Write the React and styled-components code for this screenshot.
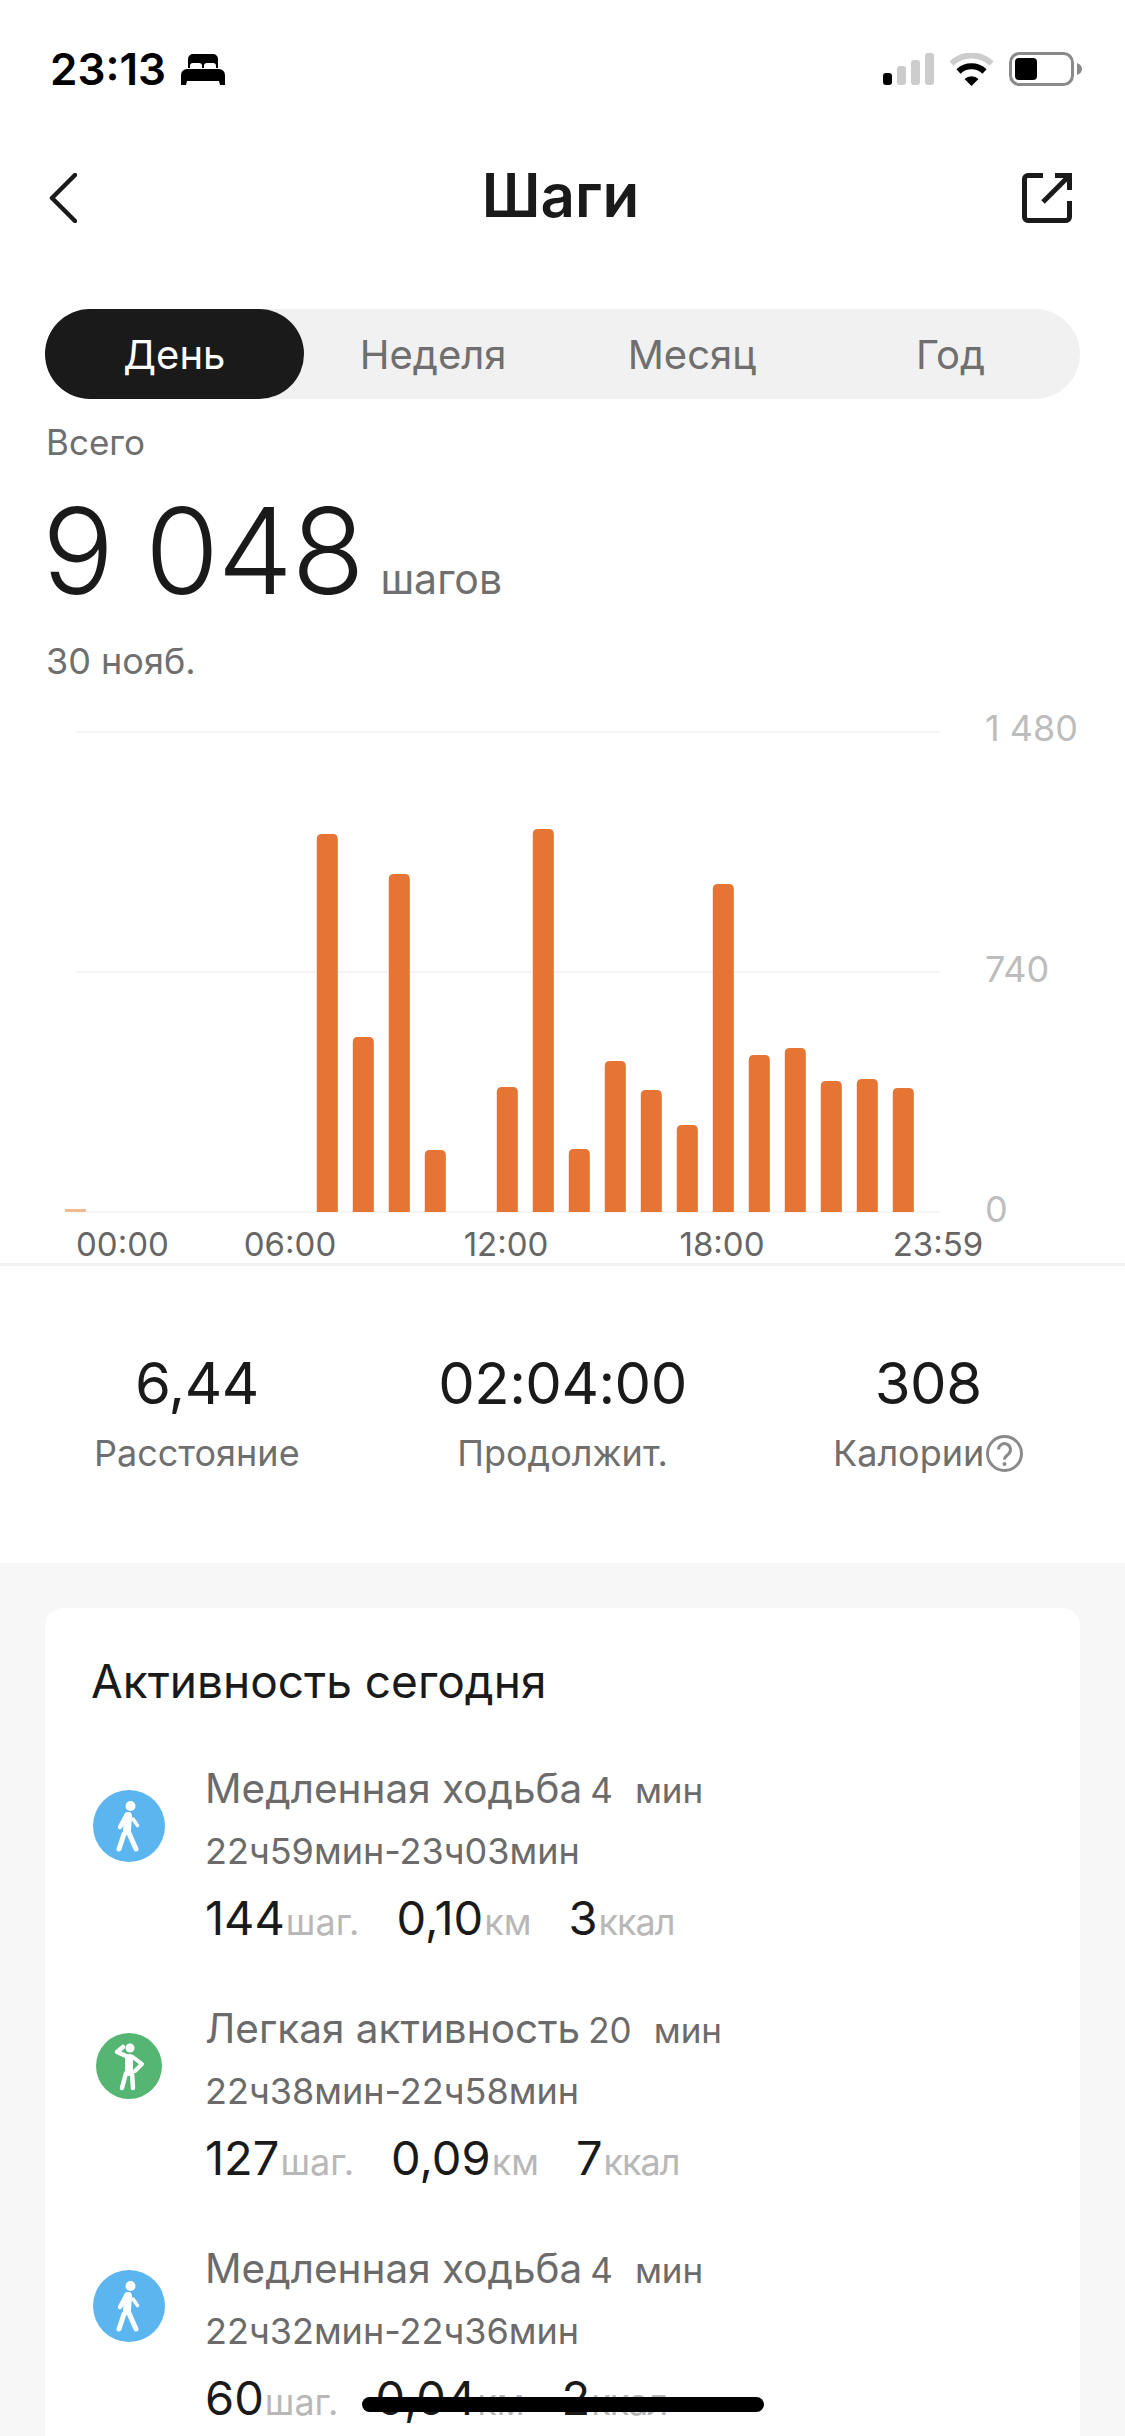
import React from 'react';
import styled, { createGlobalStyle } from 'styled-components';

const GlobalStyle = createGlobalStyle`
  html, body {
    margin: 0;
    padding: 0;
    background: #fff;
    font-family: 'Inter', 'Noto Sans', sans-serif;
    color: #1a1a1a;
  }
`;

const Screen = styled.div`
  position: relative;
  width: 1125px;
  height: 2436px;
  overflow: hidden;
  background: #fff;
`;

const StatusBar = styled.div`
  height: 138px;
  padding: 0 43px 0 50px;
  box-sizing: border-box;
  display: flex;
  align-items: center;
  justify-content: space-between;
`;

const StatusLeft = styled.div`
  display: flex;
  align-items: center;
  gap: 15px;
`;

const Clock = styled.span`
  font-size: 44px;
  font-weight: 600;
  line-height: 48px;
  color: #000;
`;

const StatusRight = styled.div`
  display: flex;
  align-items: center;
  gap: 15px;
`;

const NavBar = styled.div`
  height: 120px;
  padding: 0 53px 0 49px;
  display: grid;
  grid-template-columns: 1fr auto 1fr;
  align-items: center;
`;

const NavTitle = styled.h1`
  margin: -7px 0 0;
  font-size: 60px;
  font-weight: 600;
  line-height: 70px;
`;

const NavRight = styled.div`
  display: flex;
  justify-content: flex-end;
`;

const Tabs = styled.div`
  margin: 51px 45px 0;
  height: 90px;
  display: grid;
  grid-template-columns: repeat(4, 1fr);
  background: #f1f1f1;
  border-radius: 45px;
`;

const Tab = styled.div`
  display: flex;
  align-items: center;
  justify-content: center;
  border-radius: 45px;
  font-size: 40px;
  background: ${(p) => (p.$active ? '#1a1a1a' : 'transparent')};
  color: ${(p) => (p.$active ? '#fff' : '#6f6f6f')};
`;

const Summary = styled.div`
  padding: 23px 46px 0;
`;

const SummaryLabel = styled.div`
  font-size: 35px;
  line-height: 40px;
  color: #6f6f6f;
`;

const TotalRow = styled.div`
  margin-top: 29px;
  display: flex;
  align-items: baseline;
  gap: 17px;
`;

const TotalValue = styled.span`
  margin-left: -4px;
  font-size: 120px;
  font-weight: 360;
  line-height: 120px;
  letter-spacing: -1.500px;
  color: #1a1a1a;
`;

const TotalUnit = styled.span`
  font-size: 41px;
  color: #6f6f6f;
`;

const DateLabel = styled(SummaryLabel)`
  margin-top: 30px;
  font-size: 36px;
`;

const ChartRow = styled.div`
  margin-top: 35px;
  height: 512px;
  display: flex;
  align-items: flex-start;
`;

const Plot = styled.svg`
  display: block;
  flex: none;
`;

const YAxis = styled.div`
  margin: -6px 0 0 45px;
  height: 517px;
  display: flex;
  flex-direction: column;
  justify-content: space-between;
`;

const YLabel = styled.span`
  font-size: 36px;
  line-height: 36px;
  color: #bdbdbd;
`;

const XAxis = styled.div`
  padding: 0 0 2px 76px;
  display: grid;
  grid-template-columns: 106px repeat(4, 216px);
  justify-items: center;
`;

const XLabel = styled.span`
  font-size: 33px;
  line-height: 33px;
  color: #666;
  &:first-child {
    justify-self: start;
  }
`;

const Divider = styled.div`
  height: 3px;
  background: #f0f0f0;
`;

const Stats = styled.div`
  height: 297px;
  padding: 87px 14px 0;
  box-sizing: border-box;
  display: grid;
  grid-template-columns: repeat(3, 1fr);
  justify-items: center;
  align-content: start;
`;

const Stat = styled.div`
  display: flex;
  flex-direction: column;
  align-items: center;
  gap: 20px;
`;

const StatValue = styled.div`
  font-size: 58px;
  line-height: 60px;
  letter-spacing: -0.500px;
`;

const StatLabel = styled.div`
  display: flex;
  align-items: center;
  gap: 2px;
  font-size: 36px;
  line-height: 40px;
  color: #6f6f6f;
`;

const Section = styled.div`
  background: #f7f7f7;
  padding: 45px 45px 0;
  height: 900px;
`;

const Card = styled.div`
  background: #fff;
  border-radius: 18px;
  padding: 48px 46px 0;
  height: 900px;
`;

const CardTitle = styled.h2`
  margin: 0 0 61px;
  font-size: 46px;
  font-weight: 400;
  line-height: 50px;
`;

const Activity = styled.div`
  height: 240px;
  display: flex;
  gap: 38px;
`;

const IconSlot = styled.div`
  flex: none;
  width: 76px;
  height: 118px;
  display: flex;
  align-items: center;
  justify-content: center;
`;

const ActivityBody = styled.div`
  display: flex;
  flex-direction: column;
`;

const ActivityTitle = styled.div`
  display: flex;
  align-items: baseline;
  font-size: 40.500px;
  line-height: 44px;
  color: #6b6b6b;
`;

const Duration = styled.span`
  margin-left: 8px;
  font-size: 35px;
`;

const DurationUnit = styled.span`
  margin-left: 22px;
  font-size: 35px;
`;

const TimeRange = styled.div`
  margin-top: 19px;
  font-size: 36px;
  line-height: 40px;
  color: #6b6b6b;
`;

const Metrics = styled.div`
  margin-top: 19px;
  display: flex;
  gap: 37px;
`;

const Metric = styled.div`
  display: flex;
  align-items: baseline;
  gap: 1px;
`;

const MetricValue = styled.span`
  font-size: 47px;
  line-height: 56px;
  color: #1a1a1a;
`;

const MetricUnit = styled.span`
  font-size: 36px;
  letter-spacing: ${(p) => (p.$tight ? '-1px' : '0')};
  color: #b8b8b8;
`;

const HomeBar = styled.div`
  position: absolute;
  left: 362px;
  bottom: 24px;
  width: 402px;
  height: 15px;
  border-radius: 8px;
  background: #000;
`;

const BedIcon = () => (
  <svg width="44" height="31" viewBox="0 0 44 31" fill="#000">
    <path d="M7 14V5a5 5 0 0 1 5-5h20a5 5 0 0 1 5 5v9h-2v-2a3 3 0 0 0-3-3h-6a3 3 0 0 0-3 3v2h-2v-2a3 3 0 0 0-3-3h-6a3 3 0 0 0-3 3v2z" />
    <path d="M0 21a6 6 0 0 1 6-6h32a6 6 0 0 1 6 6v10h-5l-1-4H6l-1 4H0z" />
  </svg>
);

const SignalIcon = () => (
  <svg width="51" height="32" viewBox="0 0 51 32">
    <rect x="0" y="20" width="9" height="12" rx="3" fill="#000" />
    <rect x="14" y="13" width="9" height="19" rx="3" fill="#ccc" />
    <rect x="28" y="7" width="9" height="25" rx="3" fill="#ccc" />
    <rect x="42" y="0" width="9" height="32" rx="3" fill="#ccc" />
  </svg>
);

const WifiIcon = () => (
  <svg width="45" height="33" viewBox="0 0 45 33" fill="none">
    <path d="M2.500 10.500a29 29 0 0 1 40 0" stroke="#ccc" strokeWidth="6" />
    <path d="M9.500 18.500a19 19 0 0 1 26 0" stroke="#000" strokeWidth="6" />
    <path d="M22.500 33L15.500 26a10 10 0 0 1 14 0z" fill="#000" />
  </svg>
);

const BatteryIcon = () => (
  <svg width="73" height="34" viewBox="0 0 73 34">
    <rect x="1.500" y="1.500" width="62" height="31" rx="9" fill="none" stroke="#8a8a8a" strokeWidth="3" />
    <rect x="6" y="6" width="22" height="22" rx="4" fill="#000" />
    <path d="M68 11c3 1 5 3 5 6s-2 5-5 6z" fill="#8a8a8a" />
  </svg>
);

const BackIcon = () => (
  <svg width="28" height="50" viewBox="0 0 28 50" fill="none">
    <path d="M26 2L3 25l23 23" stroke="#1a1a1a" strokeWidth="4.500" strokeLinecap="round" strokeLinejoin="round" />
  </svg>
);

const ShareIcon = () => (
  <svg width="50" height="50" viewBox="0 0 50 50" fill="none" stroke="#1a1a1a" strokeWidth="5">
    <path d="M21 2.500H6a3.500 3.500 0 0 0-3.500 3.500v38a3.500 3.500 0 0 0 3.500 3.500h38a3.500 3.500 0 0 0 3.500-3.500V28" />
    <path d="M33 2.500h14.500V17" />
    <path d="M46 4L21 29" />
  </svg>
);

const HelpIcon = () => (
  <svg width="37" height="37" viewBox="0 0 37 37" fill="none">
    <circle cx="18.500" cy="18.500" r="17" stroke="#8a8a8a" strokeWidth="3" />
    <path d="M12.500 14.500a6 6 0 1 1 9.500 5c-2 1.500-3.500 2.500-3.500 5" stroke="#8a8a8a" strokeWidth="3" />
    <circle cx="18.500" cy="29" r="2" fill="#8a8a8a" />
  </svg>
);

const WalkIcon = () => (
  <svg width="72" height="72" viewBox="0 0 72 72">
    <circle cx="36" cy="36" r="36" fill="#5bb5ef" />
    <g fill="none" stroke="#fff" strokeLinecap="round" strokeLinejoin="round">
      <circle cx="37.500" cy="16" r="5" fill="#fff" stroke="none" />
      <path d="M35 26l-1 15" strokeWidth="8" />
      <path d="M33 26l-6 11" strokeWidth="4.500" />
      <path d="M40 29l4.500 6.500" strokeWidth="3.500" />
      <path d="M31 44l-5 15" strokeWidth="5" />
      <path d="M35 41l8 18" strokeWidth="5" />
    </g>
  </svg>
);

const StretchIcon = () => (
  <svg width="66" height="66" viewBox="0 0 66 66">
    <circle cx="33" cy="33" r="33" fill="#55b573" />
    <g fill="none" stroke="#fff" strokeLinecap="round" strokeLinejoin="round">
      <circle cx="34" cy="15" r="4.500" fill="#fff" stroke="none" />
      <path d="M33 25v14" strokeWidth="8" />
      <path d="M30 23l-9-4 6-5" strokeWidth="4.500" />
      <path d="M36 23.500l10 7.500-7 7" strokeWidth="4" />
      <path d="M30 40l-4 15" strokeWidth="4.500" />
      <path d="M36 40l1 15" strokeWidth="4.500" />
    </g>
  </svg>
);

const BASE_Y = 496;
const SLOT = 36;
const FIRST_SLOT = 75.3;
const BAR_W = 21;

// slot -> bar height in px
const bars = [
  [7, 378],
  [8, 175],
  [9, 338],
  [10, 62],
  [12, 125],
  [13, 383],
  [14, 63],
  [15, 151],
  [16, 122],
  [17, 87],
  [18, 328],
  [19, 157],
  [20, 164],
  [21, 131],
  [22, 133],
  [23, 124],
];

const barPath = (slot, h) => {
  const x = FIRST_SLOT + SLOT * slot - BAR_W / 2;
  const y = BASE_Y - h;
  return `M${x} ${BASE_Y}V${y + 5}Q${x} ${y} ${x + 5} ${y}H${x + BAR_W - 5}Q${x + BAR_W} ${y} ${x + BAR_W} ${y + 5}V${BASE_Y}Z`;
};

const StepsChart = () => (
  <Plot width="940" height="498" viewBox="0 0 940 498">
    {[16, 256, 496].map((y) => (
      <line key={y} x1="76" x2="940" y1={y} y2={y} stroke="#f5f5f5" strokeWidth="2" />
    ))}
    <rect x="65" y="493" width="21" height="3" rx="1" fill="#f0b98f" />
    {bars.map(([slot, h]) => (
      <path key={slot} d={barPath(slot, h)} fill="#e57435" />
    ))}
  </Plot>
);

const tabs = ['День', 'Неделя', 'Месяц', 'Год'];

const activities = [
  {
    icon: <WalkIcon />,
    title: 'Медленная ходьба',
    minutes: 4,
    range: '22ч59мин-23ч03мин',
    steps: '144',
    km: '0,10',
    kcal: '3',
  },
  {
    icon: <StretchIcon />,
    title: 'Легкая активность',
    minutes: 20,
    range: '22ч38мин-22ч58мин',
    steps: '127',
    km: '0,09',
    kcal: '7',
  },
  {
    icon: <WalkIcon />,
    title: 'Медленная ходьба',
    minutes: 4,
    range: '22ч32мин-22ч36мин',
    steps: '60',
    km: '0,04',
    kcal: '2',
  },
];

const App = () => (
  <Screen>
    <GlobalStyle />
    <StatusBar>
      <StatusLeft>
        <Clock>23:13</Clock>
        <BedIcon />
      </StatusLeft>
      <StatusRight>
        <SignalIcon />
        <WifiIcon />
        <BatteryIcon />
      </StatusRight>
    </StatusBar>

    <NavBar>
      <BackIcon />
      <NavTitle>Шаги</NavTitle>
      <NavRight>
        <ShareIcon />
      </NavRight>
    </NavBar>

    <Tabs>
      {tabs.map((tab, i) => (
        <Tab key={tab} $active={i === 0}>
          {tab}
        </Tab>
      ))}
    </Tabs>

    <Summary>
      <SummaryLabel>Всего</SummaryLabel>
      <TotalRow>
        <TotalValue>9 048</TotalValue>
        <TotalUnit>шагов</TotalUnit>
      </TotalRow>
      <DateLabel>30 нояб.</DateLabel>
    </Summary>

    <ChartRow>
      <StepsChart />
      <YAxis>
        <YLabel>1 480</YLabel>
        <YLabel>740</YLabel>
        <YLabel>0</YLabel>
      </YAxis>
    </ChartRow>
    <XAxis>
      <XLabel>00:00</XLabel>
      <XLabel>06:00</XLabel>
      <XLabel>12:00</XLabel>
      <XLabel>18:00</XLabel>
      <XLabel>23:59</XLabel>
    </XAxis>
    <Divider />

    <Stats>
      <Stat>
        <StatValue>6,44</StatValue>
        <StatLabel>Расстояние</StatLabel>
      </Stat>
      <Stat>
        <StatValue>02:04:00</StatValue>
        <StatLabel>Продолжит.</StatLabel>
      </Stat>
      <Stat>
        <StatValue>308</StatValue>
        <StatLabel>
          Калории
          <HelpIcon />
        </StatLabel>
      </Stat>
    </Stats>

    <Section>
      <Card>
        <CardTitle>Активность сегодня</CardTitle>
        {activities.map((a) => (
          <Activity key={a.range}>
            <IconSlot>{a.icon}</IconSlot>
            <ActivityBody>
              <ActivityTitle>
                {a.title}
                <Duration>{a.minutes}</Duration>
                <DurationUnit>мин</DurationUnit>
              </ActivityTitle>
              <TimeRange>{a.range}</TimeRange>
              <Metrics>
                <Metric>
                  <MetricValue>{a.steps}</MetricValue>
                  <MetricUnit>шаг.</MetricUnit>
                </Metric>
                <Metric>
                  <MetricValue>{a.km}</MetricValue>
                  <MetricUnit>км</MetricUnit>
                </Metric>
                <Metric>
                  <MetricValue>{a.kcal}</MetricValue>
                  <MetricUnit $tight>ккал</MetricUnit>
                </Metric>
              </Metrics>
            </ActivityBody>
          </Activity>
        ))}
      </Card>
    </Section>

    <HomeBar />
  </Screen>
);

export default App;
